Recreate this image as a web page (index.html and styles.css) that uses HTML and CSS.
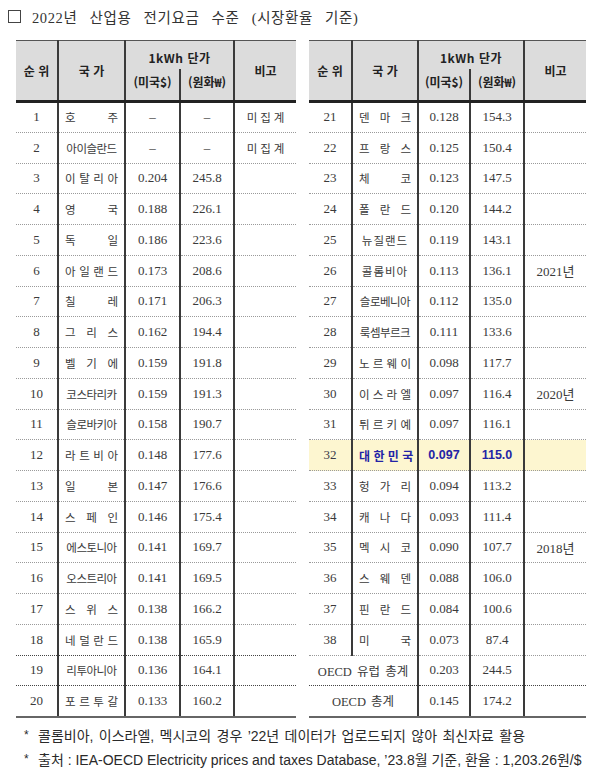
FILE: index.html
```html
<!DOCTYPE html>
<html lang="ko">
<head>
<meta charset="utf-8">
<title>2022년 산업용 전기요금 수준</title>
<link rel="stylesheet" href="styles.css">
</head>
<body>
<div class="page">
  <div class="title"><span class="box"></span><span class="title-text">2022년 산업용 전기요금 수준 (시장환율 기준)</span></div>
  <div class="tables">
    <table class="tbl tbl-left">
      <colgroup><col class="c-rank"><col class="c-name"><col class="c-usd"><col class="c-krw"><col class="c-note"></colgroup>
      <thead>
        <tr class="h1"><th rowspan="2">순 위</th><th rowspan="2">국 가</th><th colspan="2" class="unit">1kWh 단가</th><th rowspan="2">비고</th></tr>
        <tr class="h2"><th class="sub">(미국$)</th><th class="sub">(원화₩)</th></tr>
      </thead>
      <tbody>
        <tr><td class="rank">1</td><td class="name">호 주</td><td class="num">–</td><td class="num">–</td><td class="note">미집계</td></tr>
        <tr><td class="rank">2</td><td class="name tight">아이슬란드</td><td class="num">–</td><td class="num">–</td><td class="note">미집계</td></tr>
        <tr><td class="rank">3</td><td class="name">이 탈 리 아</td><td class="num">0.204</td><td class="num">245.8</td><td class="note"></td></tr>
        <tr><td class="rank">4</td><td class="name">영 국</td><td class="num">0.188</td><td class="num">226.1</td><td class="note"></td></tr>
        <tr><td class="rank">5</td><td class="name">독 일</td><td class="num">0.186</td><td class="num">223.6</td><td class="note"></td></tr>
        <tr><td class="rank">6</td><td class="name">아 일 랜 드</td><td class="num">0.173</td><td class="num">208.6</td><td class="note"></td></tr>
        <tr><td class="rank">7</td><td class="name">칠 레</td><td class="num">0.171</td><td class="num">206.3</td><td class="note"></td></tr>
        <tr><td class="rank">8</td><td class="name">그 리 스</td><td class="num">0.162</td><td class="num">194.4</td><td class="note"></td></tr>
        <tr><td class="rank">9</td><td class="name">벨 기 에</td><td class="num">0.159</td><td class="num">191.8</td><td class="note"></td></tr>
        <tr><td class="rank">10</td><td class="name tight">코스타리카</td><td class="num">0.159</td><td class="num">191.3</td><td class="note"></td></tr>
        <tr><td class="rank">11</td><td class="name tight">슬로바키아</td><td class="num">0.158</td><td class="num">190.7</td><td class="note"></td></tr>
        <tr><td class="rank">12</td><td class="name">라 트 비 아</td><td class="num">0.148</td><td class="num">177.6</td><td class="note"></td></tr>
        <tr><td class="rank">13</td><td class="name">일 본</td><td class="num">0.147</td><td class="num">176.6</td><td class="note"></td></tr>
        <tr><td class="rank">14</td><td class="name">스 페 인</td><td class="num">0.146</td><td class="num">175.4</td><td class="note"></td></tr>
        <tr><td class="rank">15</td><td class="name tight">에스토니아</td><td class="num">0.141</td><td class="num">169.7</td><td class="note"></td></tr>
        <tr><td class="rank">16</td><td class="name tight">오스트리아</td><td class="num">0.141</td><td class="num">169.5</td><td class="note"></td></tr>
        <tr><td class="rank">17</td><td class="name">스 위 스</td><td class="num">0.138</td><td class="num">166.2</td><td class="note"></td></tr>
        <tr><td class="rank">18</td><td class="name">네 덜 란 드</td><td class="num">0.138</td><td class="num">165.9</td><td class="note"></td></tr>
        <tr class="dark-sep"><td class="rank">19</td><td class="name tight">리투아니아</td><td class="num">0.136</td><td class="num">164.1</td><td class="note"></td></tr>
        <tr class="dark-sep"><td class="rank">20</td><td class="name">포 르 투 갈</td><td class="num">0.133</td><td class="num">160.2</td><td class="note"></td></tr>
      </tbody>
    </table>
    <table class="tbl tbl-right">
      <colgroup><col class="c-rank"><col class="c-name"><col class="c-usd"><col class="c-krw"><col class="c-note"></colgroup>
      <thead>
        <tr class="h1"><th rowspan="2">순 위</th><th rowspan="2">국 가</th><th colspan="2" class="unit">1kWh 단가</th><th rowspan="2">비고</th></tr>
        <tr class="h2"><th class="sub">(미국$)</th><th class="sub">(원화₩)</th></tr>
      </thead>
      <tbody>
        <tr><td class="rank">21</td><td class="name">덴 마 크</td><td class="num">0.128</td><td class="num">154.3</td><td class="note"></td></tr>
        <tr><td class="rank">22</td><td class="name">프 랑 스</td><td class="num">0.125</td><td class="num">150.4</td><td class="note"></td></tr>
        <tr><td class="rank">23</td><td class="name">체 코</td><td class="num">0.123</td><td class="num">147.5</td><td class="note"></td></tr>
        <tr><td class="rank">24</td><td class="name">폴 란 드</td><td class="num">0.120</td><td class="num">144.2</td><td class="note"></td></tr>
        <tr><td class="rank">25</td><td class="name center">뉴질랜드</td><td class="num">0.119</td><td class="num">143.1</td><td class="note"></td></tr>
        <tr><td class="rank">26</td><td class="name center">콜롬비아</td><td class="num">0.113</td><td class="num">136.1</td><td class="note year">2021년</td></tr>
        <tr><td class="rank">27</td><td class="name tight">슬로베니아</td><td class="num">0.112</td><td class="num">135.0</td><td class="note"></td></tr>
        <tr><td class="rank">28</td><td class="name tight">룩셈부르크</td><td class="num">0.111</td><td class="num">133.6</td><td class="note"></td></tr>
        <tr><td class="rank">29</td><td class="name">노 르 웨 이</td><td class="num">0.098</td><td class="num">117.7</td><td class="note"></td></tr>
        <tr><td class="rank">30</td><td class="name">이 스 라 엘</td><td class="num">0.097</td><td class="num">116.4</td><td class="note year">2020년</td></tr>
        <tr><td class="rank">31</td><td class="name">튀 르 키 예</td><td class="num">0.097</td><td class="num">116.1</td><td class="note"></td></tr>
        <tr class="korea"><td class="rank">32</td><td class="name">대 한 민 국</td><td class="num">0.097</td><td class="num">115.0</td><td class="note"></td></tr>
        <tr><td class="rank">33</td><td class="name">헝 가 리</td><td class="num">0.094</td><td class="num">113.2</td><td class="note"></td></tr>
        <tr><td class="rank">34</td><td class="name">캐 나 다</td><td class="num">0.093</td><td class="num">111.4</td><td class="note"></td></tr>
        <tr><td class="rank">35</td><td class="name">멕 시 코</td><td class="num">0.090</td><td class="num">107.7</td><td class="note year">2018년</td></tr>
        <tr><td class="rank">36</td><td class="name">스 웨 덴</td><td class="num">0.088</td><td class="num">106.0</td><td class="note"></td></tr>
        <tr><td class="rank">37</td><td class="name">핀 란 드</td><td class="num">0.084</td><td class="num">100.6</td><td class="note"></td></tr>
        <tr><td class="rank">38</td><td class="name">미 국</td><td class="num">0.073</td><td class="num">87.4</td><td class="note"></td></tr>
        <tr><td class="total" colspan="2">OECD 유럽 총계</td><td class="num">0.203</td><td class="num">244.5</td><td class="note"></td></tr>
        <tr class="dark-sep"><td class="total" colspan="2">OECD 총계</td><td class="num">0.145</td><td class="num">174.2</td><td class="note"></td></tr>
      </tbody>
    </table>
  </div>
  <div class="notes">
    <div class="note-line first"><span class="star">*</span><span>콜롬비아, 이스라엘, 멕시코의 경우 ’22년 데이터가 업로드되지 않아 최신자료 활용</span></div>
    <div class="note-line"><span class="star">*</span><span>출처 : IEA-OECD Electricity prices and taxes Database, ’23.8월 기준, 환율 : 1,203.26원/$</span></div>
  </div>
</div>
</body>
</html>
```

FILE: styles.css
```css
* { box-sizing: border-box; }
html, body { margin: 0; padding: 0; background: #fff; }
body { width: 600px; height: 775px; overflow: hidden; }

.page {
  padding: 6px 0 0 0;
  color: #333;
}

.title {
  display: flex;
  align-items: center;
  gap: 11px;
  height: 20px;
  padding-left: 8px;
  font-family: "Liberation Serif", "Noto Sans CJK KR", serif;
  font-size: 14.5px;
  color: #333;
  letter-spacing: 0.6px;
  word-spacing: 8px;
}
.box {
  width: 13px;
  height: 13px;
  border: 1px solid #444;
  flex: none;
}

.tables {
  display: flex;
  gap: 13px;
  padding-left: 16px;
  margin-top: 14px;
}

.tbl {
  border-collapse: collapse;
  table-layout: fixed;
}
.tbl-left { width: 280px; }
.tbl-right { width: 277px; }
.tbl-left .c-rank { width: 42px; }
.tbl-left .c-name { width: 67px; }
.tbl-left .c-usd { width: 55px; }
.tbl-left .c-krw { width: 54px; }
.tbl-left .c-note { width: 62px; }
.tbl-right .c-rank { width: 43px; }
.tbl-right .c-name { width: 66px; }
.tbl-right .c-usd { width: 52px; }
.tbl-right .c-krw { width: 54px; }
.tbl-right .c-note { width: 62px; }

.tbl th {
  background: #dcdcdc;
  font-family: "Noto Sans CJK KR", "Liberation Sans", sans-serif;
  font-weight: 700;
  font-size: 12px;
  color: #222;
  padding: 0;
  text-align: center;
  vertical-align: middle;
}
.tbl .h1 { height: 28px; }
.tbl .h1 th { border-top: 1px solid #555; }
.tbl .h2 { height: 33px; }
.tbl .h1 .unit { vertical-align: bottom; padding-bottom: 3px; letter-spacing: 0.5px; }
.tbl .h2 th { vertical-align: top; padding-top: 4px; }
.tbl tr > * + * { border-left: 2px solid #3a3a3a; }
.tbl .h2 th:first-child { border-left: 2px solid #3a3a3a; }

.tbl tbody tr { height: 30.75px; }
.tbl tbody td {
  padding: 0;
  text-align: center;
  vertical-align: middle;
  color: #3a3a3a;
  border-top: 1px dotted #9a9a9a;
}
.tbl tbody tr:first-child td { border-top: 3px solid #222; }
.tbl tbody tr.dark-sep td { border-top: 1px dotted #444; }
.tbl tbody tr:last-child td { border-bottom: 2px solid #666; }

.rank, .num {
  font-family: "Liberation Serif", "Noto Sans CJK KR", serif;
  font-size: 13px;
}
.name {
  font-family: "Noto Sans CJK KR", sans-serif;
  font-size: 11.5px;
  color: #444;
  text-align: justify !important;
  text-align-last: justify;
  padding: 0 6px !important;
  white-space: nowrap;
}
.name.tight { letter-spacing: -0.5px; text-align-last: center; }
.name.center { text-align-last: center; letter-spacing: 1px; }
.total {
  font-family: "Liberation Serif", "Noto Sans CJK KR", serif;
  font-size: 12.5px;
  color: #3a3a3a;
  word-spacing: 2px;
}
.note {
  font-family: "Noto Sans CJK KR", sans-serif;
  font-size: 11.5px;
  color: #444;
  letter-spacing: 3px;
  padding-left: 3px !important;
}
.note.year {
  font-family: "Liberation Serif", "Noto Sans CJK KR", serif;
  font-size: 13px;
  letter-spacing: 0;
  padding-left: 0 !important;
}

.korea td { background: #fdf6d0; }
.korea .name, .korea .num {
  font-family: "Liberation Sans", "Noto Sans CJK KR", sans-serif;
  font-weight: 700;
  color: #2323a6;
  font-size: 12.5px;
}
.korea .name { font-family: "Noto Sans CJK KR", sans-serif; font-size: 12px; }
.korea .rank { color: #3a3a4a; }

.notes {
  margin-top: 5px;
  padding-left: 24px;
  font-family: "Liberation Sans", "Noto Sans CJK KR", sans-serif;
  font-size: 14px;
  color: #2a2a2a;
}
.note-line {
  display: flex;
  height: 24px;
  align-items: center;
}
.note-line.first { word-spacing: 1.5px; }
.star {
  width: 14px;
  flex: none;
  font-size: 12px;
}
```
